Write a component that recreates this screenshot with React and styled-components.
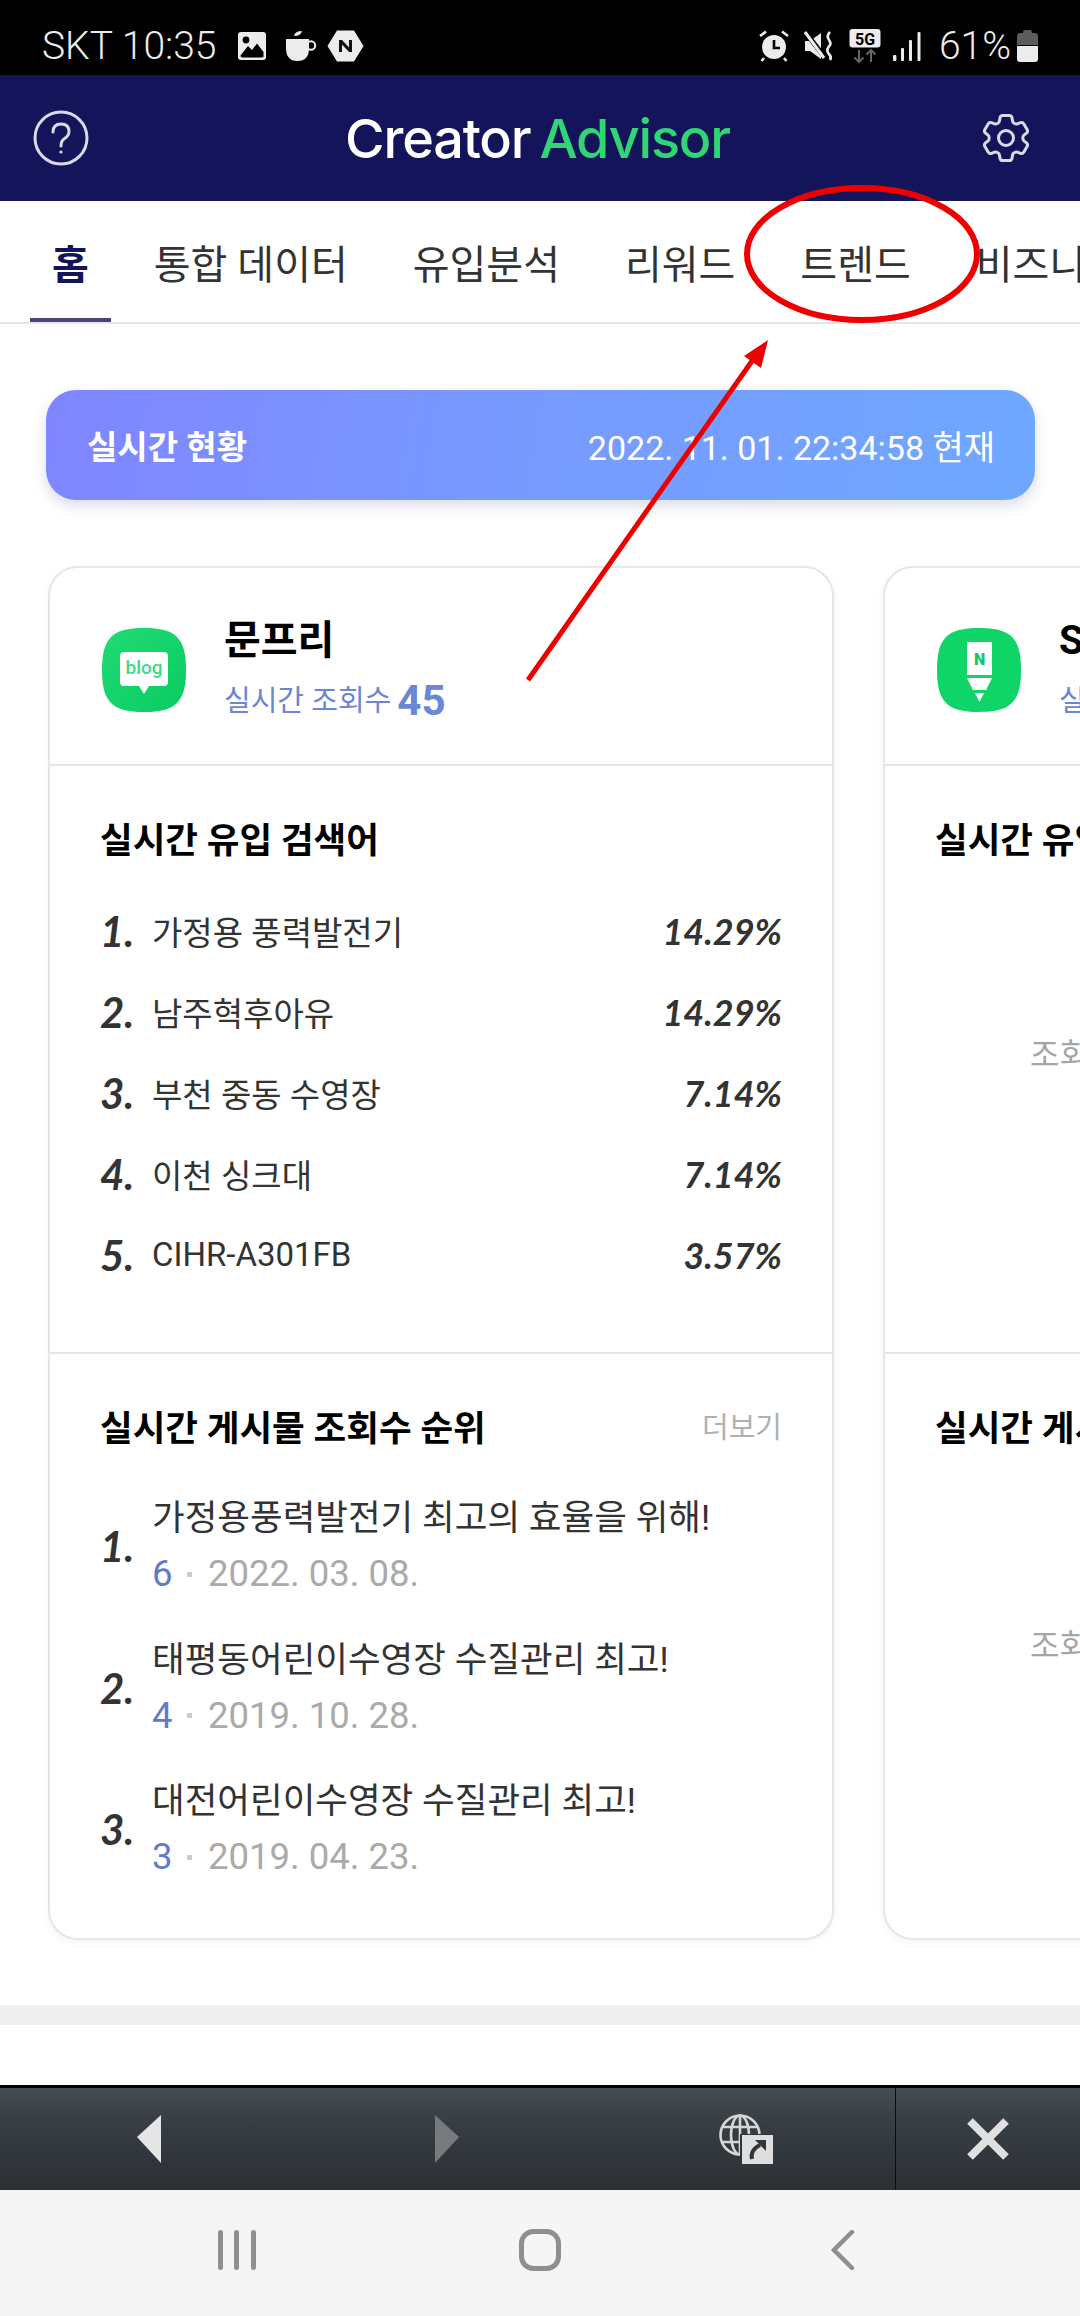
import React from 'react';
import styled, { createGlobalStyle } from 'styled-components';
import { HiOutlineCog6Tooth } from 'react-icons/hi2';

const GlobalStyle = createGlobalStyle`
  html, body {
    margin: 0;
    padding: 0;
    background: #fff;
  }
  body {
    font-family: Roboto, "Noto Sans CJK KR", sans-serif;
  }
`;

const Page = styled.div`
  position: relative;
  width: 1080px;
  height: 2316px;
  overflow: hidden;
  display: flex;
  flex-direction: column;
  background: #fff;
`;

const StatusBar = styled.div`
  height: 75px;
  flex-shrink: 0;
  background: #000;
  color: #ececec;
  display: flex;
  align-items: center;
  justify-content: space-between;
  padding: 17px 42px 0;
  box-sizing: border-box;
  font-size: 39px;
  font-weight: 300;
`;

const StatusGroup = styled.div`
  display: flex;
  align-items: center;
`;

const StatusText = styled.span`
  margin-right: ${(p) => p.$after || 0}px;
  line-height: 1;
`;

const StatusIcon = styled.svg`
  display: block;
  flex-shrink: 0;
  margin-right: ${(p) => p.$after || 0}px;
`;

const Header = styled.header`
  height: 126px;
  flex-shrink: 0;
  background: #14145a;
  display: flex;
  align-items: center;
  justify-content: space-between;
  padding: 0 44px 0 33px;
  box-sizing: border-box;
  color: #d9d9ea;
`;

const Logo = styled.div`
  font-family: Inter, sans-serif;
  font-size: 54px;
  font-weight: 500;
  letter-spacing: -1.2px;
  color: #fff;
  display: flex;
  gap: 9px;
  margin-left: 10px;
`;

const LogoAccent = styled.span`
  color: #2fd673;
`;

const Tabs = styled.nav`
  height: 123px;
  flex-shrink: 0;
  box-sizing: border-box;
  border-bottom: 2px solid #e6e6e6;
  display: flex;
  gap: 21px;
  padding-left: 30px;
  overflow: hidden;
`;

const Tab = styled.div`
  flex-shrink: 0;
  padding: 5px 22px 0;
  height: 123px;
  box-sizing: border-box;
  display: flex;
  align-items: center;
  font-size: 40px;
  white-space: nowrap;
  color: ${(p) => (p.$active ? '#14145a' : '#333')};
  font-weight: ${(p) => (p.$active ? 700 : 400)};
  border-bottom: 6px solid ${(p) => (p.$active ? '#45467a' : 'transparent')};
`;

const Banner = styled.div`
  margin: 66px 45px 0 46px;
  height: 110px;
  flex-shrink: 0;
  border-radius: 30px;
  background: linear-gradient(100deg, #8085ff 0%, #7899ff 45%, #6fa8ff 100%);
  box-shadow: 0 6px 14px rgba(90, 100, 160, 0.22);
  color: #fff;
  display: flex;
  align-items: center;
  justify-content: space-between;
  padding: 0 40px 0 41px;
`;

const BannerTitle = styled.div`
  font-size: 33px;
  font-weight: 700;
`;

const BannerTime = styled.div`
  font-size: 34px;
`;

const CardRow = styled.div`
  margin-top: 66px;
  padding-left: 48px;
  display: flex;
  gap: 49px;
  flex-shrink: 0;
`;

const Card = styled.section`
  width: 786px;
  height: 1374px;
  flex-shrink: 0;
  box-sizing: border-box;
  border: 2px solid #e6e6e6;
  border-radius: 30px;
  box-shadow: 0 2px 8px rgba(0, 0, 0, 0.05);
  display: flex;
  flex-direction: column;
  background: #fff;
`;

const CardHead = styled.div`
  height: 198px;
  flex-shrink: 0;
  box-sizing: border-box;
  display: flex;
  align-items: center;
  gap: 38px;
  padding: 8px 0 0 52px;
  border-bottom: 2px solid #e6e6e6;
`;

const CardHeadText = styled.div`
  display: flex;
  flex-direction: column;
  gap: 8px;
  margin-top: 2px;
  white-space: nowrap;
`;

const CardName = styled.div`
  font-size: 40px;
  font-weight: 700;
  color: #000;
  line-height: 52px;
`;

const CardViews = styled.div`
  font-size: 29px;
  color: #6b86d2;
  line-height: 52px;
  display: flex;
  align-items: center;
  gap: 6px;
`;

const CardViewsCount = styled.b`
  font-size: 42px;
  font-weight: 700;
`;

const Section = styled.div`
  box-sizing: border-box;
  padding: 46px 50px 0 50px;
  height: ${(p) => (p.$grow ? 'auto' : '588px')};
  flex: ${(p) => (p.$grow ? 1 : 'none')};
  border-bottom: ${(p) => (p.$grow ? 'none' : '2px solid #e6e6e6')};
`;

const SectionHead = styled.div`
  display: flex;
  align-items: center;
  justify-content: space-between;
  height: 50px;
  white-space: nowrap;
`;

const SectionTitle = styled.h3`
  margin: 0;
  font-size: 35.5px;
  font-weight: 700;
  color: #000;
`;

const More = styled.span`
  font-size: 29px;
  color: #b0b0b0;
`;

const KeywordList = styled.ol`
  list-style: none;
  margin: 28px 0 0;
  padding: 0;
`;

const Keyword = styled.li`
  height: 81px;
  display: flex;
  align-items: center;
`;

const Rank = styled.span`
  width: 52px;
  flex-shrink: 0;
  font-family: Lato, sans-serif;
  font-size: 42px;
  font-weight: 700;
  font-style: italic;
  color: #333;
`;

const KeywordText = styled.span`
  flex: 1;
  font-size: 33px;
  color: #333;
`;

const Percent = styled.span`
  font-family: Lato, sans-serif;
  font-size: 36px;
  font-weight: 700;
  font-style: italic;
  color: #333;
`;

const PostList = styled.ol`
  list-style: none;
  margin: 40px 0 0;
  padding: 0;
  display: flex;
  flex-direction: column;
  gap: 29.5px;
`;

const Post = styled.li`
  height: 112px;
  display: flex;
  align-items: center;
`;

const PostTitle = styled.div`
  font-size: 35.5px;
  line-height: 56px;
  color: #333;
  white-space: nowrap;
`;

const PostMeta = styled.div`
  font-size: 36.5px;
  line-height: 56px;
  color: #aaa;
  display: flex;
  align-items: center;
`;

const PostViews = styled.span`
  color: #5f7bc9;
  width: 35px;
`;

const Dot = styled.i`
  width: 5px;
  height: 5px;
  background: #ccc;
  margin-right: 16px;
`;

const Empty = styled.div`
  height: ${(p) => p.$height}px;
  display: flex;
  align-items: center;
  padding-left: 95px;
  font-size: 32px;
  color: #a5a5a5;
  white-space: nowrap;
`;

const Band = styled.div`
  margin-top: 65px;
  height: 20px;
  flex-shrink: 0;
  background: #efefef;
`;

const Toolbar = styled.div`
  margin-top: auto;
  height: 105px;
  flex-shrink: 0;
  box-sizing: border-box;
  border-top: 3px solid #000;
  background: linear-gradient(180deg, #454e54 0%, #363d43 35%, #2c3035 100%);
  display: grid;
  grid-template-columns: 298px 298px 299px 1fr;
`;

const ToolSlot = styled.div`
  display: flex;
  align-items: center;
  justify-content: center;
  border-left: ${(p) => (p.$divided ? '1px solid #0a0c0e' : 'none')};
`;

const NavBar = styled.div`
  height: 126px;
  flex-shrink: 0;
  background: #f5f5f5;
  display: grid;
  grid-template-columns: repeat(3, 303px);
  padding-left: 85px;
`;

const NavSlot = styled.div`
  display: flex;
  align-items: center;
  justify-content: center;
  color: #8f8f8f;
  padding-bottom: 6px;
`;

const Annotation = styled.svg`
  position: absolute;
  left: 0;
  top: 0;
  pointer-events: none;
`;

const ImageIcon = () => (
  <StatusIcon width="30" height="30" viewBox="0 0 30 30" $after={18}>
    <rect x="1" y="1" width="28" height="28" rx="3" fill="#ececec" />
    <circle cx="9" cy="9" r="3.4" fill="#000" />
    <path d="M3.5 24.5 L11 15 L15 19 L20 12.5 L26.5 21 V25.5 Q26.5 26.5 25 26.5 H5 Q3.5 26.5 3.5 24.5Z" fill="#000" />
  </StatusIcon>
);

const CupIcon = () => (
  <StatusIcon width="32" height="32" viewBox="0 0 32 32" $after={10}>
    <path d="M9 6 Q10 1 17 1 Q16 6 9 6Z" fill="#ececec" />
    <path d="M1 9 H24 V18 Q24 31 12.5 31 Q1 31 1 18Z" fill="#ececec" />
    <circle cx="26" cy="15.5" r="4.2" fill="none" stroke="#ececec" strokeWidth="2" />
  </StatusIcon>
);

const HexIcon = () => (
  <StatusIcon width="37" height="32" viewBox="0 0 37 32">
    <path d="M10 0.5 H27 L36.5 16 L27 31.5 H10 L0.5 16Z" fill="#ececec" />
    <path d="M12 22 V10 H15 L22 17.5 V10 H25 V22 H22 L15 14.5 V22Z" fill="#111" />
  </StatusIcon>
);

const AlarmIcon = () => (
  <StatusIcon width="30" height="32" viewBox="0 0 30 32" $after={15}>
    <circle cx="15" cy="17" r="12" fill="#ececec" />
    <path d="M15 10 V18 H21" fill="none" stroke="#000" strokeWidth="2.6" />
    <path d="M1 6 L7 1.5 M29 6 L23 1.5 M5 28 L2.5 31 M25 28 L27.5 31" stroke="#ececec" strokeWidth="2.6" />
  </StatusIcon>
);

const MuteIcon = () => (
  <StatusIcon width="30" height="30" viewBox="0 0 30 30" $after={15}>
    <path d="M1 10 H6 L17 2 V28 L6 20 H1Z" fill="#ececec" />
    <path d="M2 2 L22 28" stroke="#000" strokeWidth="5" />
    <path d="M1 1 L20 27" stroke="#ececec" strokeWidth="3" />
    <path d="M26 1 Q22 5 25 9 Q28 13 24.5 16 Q22 20 25 23 Q28 26 26 29" fill="none" stroke="#ececec" strokeWidth="2.6" />
  </StatusIcon>
);

const NetworkIcon = () => (
  <StatusIcon width="32" height="34" viewBox="0 0 32 34" $after={12}>
    <rect x="0.5" y="0" width="31" height="18.5" rx="3" fill="#ececec" />
    <text x="16" y="15.5" textAnchor="middle" fontFamily="Roboto, sans-serif" fontSize="16" fontWeight="700" fill="#000">5G</text>
    <path d="M10 21 V33 M5.5 28.5 L10 33 L14.5 28.5 M22 33 V21 M17.5 25.5 L22 21 L26.5 25.5" fill="none" stroke="#666" strokeWidth="2" />
  </StatusIcon>
);

const SignalIcon = () => (
  <StatusIcon width="28" height="30" viewBox="0 0 28 30" $after={18}>
    <rect x="0" y="24" width="3.4" height="6" rx="1" fill="#ececec" />
    <rect x="8" y="17" width="3" height="13" rx="1" fill="#ececec" />
    <rect x="16" y="9" width="3" height="21" rx="1" fill="#ececec" />
    <rect x="24.5" y="1" width="3" height="29" rx="1" fill="#ececec" />
  </StatusIcon>
);

const BatteryIcon = () => (
  <StatusIcon width="21" height="32" viewBox="0 0 21 32">
    <path d="M6 3 Q6 0 8 0 H13 Q15 0 15 3 H18 Q21 3 21 6 V15 H0 V6 Q0 3 3 3Z" fill="#5c5c5c" />
    <path d="M0 16 H21 V29 Q21 32 18 32 H3 Q0 32 0 29Z" fill="#ececec" />
  </StatusIcon>
);

const HelpIcon = () => (
  <svg width="56" height="56" viewBox="0 0 56 56" fill="none" stroke="currentColor" strokeWidth="3">
    <circle cx="28" cy="28" r="26" />
    <path d="M20 22 Q20 14 28 14 Q36 14 36 21.5 Q36 26 31 29 Q28 31 28 36" strokeLinecap="round" />
    <circle cx="28" cy="42" r="1.6" fill="currentColor" stroke="none" />
  </svg>
);

const BlogIcon = () => (
  <svg width="84" height="84" viewBox="0 0 84 84" style={{ flexShrink: 0 }}>
    <defs>
      <linearGradient id="blogGreen" x1="0" y1="0" x2="1" y2="1">
        <stop offset="0" stopColor="#1fdc72" />
        <stop offset="1" stopColor="#0acb62" />
      </linearGradient>
    </defs>
    <path d="M42 0 C74 0 84 10 84 42 C84 74 74 84 42 84 C10 84 0 74 0 42 C0 10 10 0 42 0Z" fill="url(#blogGreen)" />
    <path d="M22 24 H62 Q66 24 66 28 V54 Q66 58 62 58 H47 L42 66 L37 58 H22 Q18 58 18 54 V28 Q18 24 22 24Z" fill="#fff" />
    <text x="42" y="46" textAnchor="middle" fontFamily="Roboto, sans-serif" fontSize="19" fontWeight="500" fill="#3fd987">blog</text>
  </svg>
);

const PencilIcon = () => (
  <svg width="84" height="84" viewBox="0 0 84 84" style={{ flexShrink: 0 }}>
    <path d="M42 0 C74 0 84 10 84 42 C84 74 74 84 42 84 C10 84 0 74 0 42 C0 10 10 0 42 0Z" fill="#0fd468" />
    <path d="M30 14 H55 V47 H30Z M30 50 H55 L49 62 H36Z M38 65 H47 L42.5 74Z" fill="#fff" />
    <text x="42.5" y="37" textAnchor="middle" fontFamily="Roboto, sans-serif" fontSize="16" fontWeight="900" fill="#12c866">N</text>
  </svg>
);

const GlobeIcon = () => (
  <svg width="54" height="50" viewBox="0 0 54 50">
    <g fill="none" stroke="#d6d6d6" strokeWidth="2.6">
      <circle cx="21" cy="21" r="19.5" />
      <ellipse cx="21" cy="21" rx="9" ry="19.5" />
      <path d="M21 1 V41 M3 13 H39 M2 28 H40" />
    </g>
    <rect x="21" y="20" width="33" height="30" fill="#2f3439" />
    <rect x="23" y="21" width="31" height="29" fill="#dedede" />
    <path d="M33 45 Q31 36 41 31" fill="none" stroke="#30353a" strokeWidth="4" />
    <path d="M36 26 H47 V37Z" fill="#30353a" />
  </svg>
);

const keywords = [
  ['1.', '가정용 풍력발전기', '14.29%'],
  ['2.', '남주혁후아유', '14.29%'],
  ['3.', '부천 중동 수영장', '7.14%'],
  ['4.', '이천 싱크대', '7.14%'],
  ['5.', 'CIHR-A301FB', '3.57%'],
];

const posts = [
  ['1.', '가정용풍력발전기 최고의 효율을 위해!', '6', '2022. 03. 08.'],
  ['2.', '태평동어린이수영장 수질관리 최고!', '4', '2019. 10. 28.'],
  ['3.', '대전어린이수영장 수질관리 최고!', '3', '2019. 04. 23.'],
];

export default function App() {
  return (
    <Page>
      <GlobalStyle />
      <StatusBar>
        <StatusGroup>
          <StatusText $after={20}>SKT 10:35</StatusText>
          <ImageIcon />
          <CupIcon />
          <HexIcon />
        </StatusGroup>
        <StatusGroup>
          <AlarmIcon />
          <MuteIcon />
          <NetworkIcon />
          <SignalIcon />
          <StatusText $after={6}>61%</StatusText>
          <BatteryIcon />
        </StatusGroup>
      </StatusBar>

      <Header>
        <HelpIcon />
        <Logo>
          <span>Creator</span>
          <LogoAccent>Advisor</LogoAccent>
        </Logo>
        <HiOutlineCog6Tooth size={60} strokeWidth={1.2} />
      </Header>

      <Tabs>
        <Tab $active>홈</Tab>
        <Tab>통합 데이터</Tab>
        <Tab>유입분석</Tab>
        <Tab>리워드</Tab>
        <Tab>트렌드</Tab>
        <Tab>비즈니스</Tab>
      </Tabs>

      <Banner>
        <BannerTitle>실시간 현황</BannerTitle>
        <BannerTime>2022. 11. 01. 22:34:58 현재</BannerTime>
      </Banner>

      <CardRow>
        <Card>
          <CardHead>
            <BlogIcon />
            <CardHeadText>
              <CardName>문프리</CardName>
              <CardViews>
                실시간 조회수 <CardViewsCount>45</CardViewsCount>
              </CardViews>
            </CardHeadText>
          </CardHead>
          <Section>
            <SectionHead>
              <SectionTitle>실시간 유입 검색어</SectionTitle>
            </SectionHead>
            <KeywordList>
              {keywords.map(([rank, text, pct]) => (
                <Keyword key={rank}>
                  <Rank>{rank}</Rank>
                  <KeywordText>{text}</KeywordText>
                  <Percent>{pct}</Percent>
                </Keyword>
              ))}
            </KeywordList>
          </Section>
          <Section $grow>
            <SectionHead>
              <SectionTitle>실시간 게시물 조회수 순위</SectionTitle>
              <More>더보기</More>
            </SectionHead>
            <PostList>
              {posts.map(([rank, title, views, date]) => (
                <Post key={rank}>
                  <Rank>{rank}</Rank>
                  <div>
                    <PostTitle>{title}</PostTitle>
                    <PostMeta>
                      <PostViews>{views}</PostViews>
                      <Dot />
                      {date}
                    </PostMeta>
                  </div>
                </Post>
              ))}
            </PostList>
          </Section>
        </Card>

        <Card>
          <CardHead>
            <PencilIcon />
            <CardHeadText>
              <CardName>S</CardName>
              <CardViews>
                실시간 조회수 <CardViewsCount>0</CardViewsCount>
              </CardViews>
            </CardHeadText>
          </CardHead>
          <Section>
            <SectionHead>
              <SectionTitle>실시간 유입 검색어</SectionTitle>
            </SectionHead>
            <Empty $height={380}>조회된 데이터가 없습니다.</Empty>
          </Section>
          <Section $grow>
            <SectionHead>
              <SectionTitle>실시간 게시물 조회수 순위</SectionTitle>
            </SectionHead>
            <Empty $height={386}>조회된 데이터가 없습니다.</Empty>
          </Section>
        </Card>
      </CardRow>

      <Band />

      <Toolbar>
        <ToolSlot>
          <svg width="26" height="48" viewBox="0 0 26 48"><path d="M25 0 V48 L1 22Z" fill="#e6e6e6" /></svg>
        </ToolSlot>
        <ToolSlot>
          <svg width="26" height="48" viewBox="0 0 26 48"><path d="M1 0 V48 L25 22Z" fill="#777b7e" /></svg>
        </ToolSlot>
        <ToolSlot>
          <GlobeIcon />
        </ToolSlot>
        <ToolSlot $divided>
          <svg width="44" height="42" viewBox="0 0 44 42">
            <path d="M4 3 L40 39 M40 3 L4 39" stroke="#e0e0e0" strokeWidth="8" />
          </svg>
        </ToolSlot>
      </Toolbar>

      <NavBar>
        <NavSlot>
          <svg width="38" height="40" viewBox="0 0 38 40" fill="#8f8f8f">
            <rect x="0" y="0" width="5" height="40" rx="2.5" />
            <rect x="16" y="0" width="5" height="40" rx="2.5" />
            <rect x="33" y="0" width="5" height="40" rx="2.5" />
          </svg>
        </NavSlot>
        <NavSlot>
          <svg width="42" height="42" viewBox="0 0 42 42">
            <rect x="2.5" y="2.5" width="37" height="37" rx="12" fill="none" stroke="#8f8f8f" strokeWidth="5" />
          </svg>
        </NavSlot>
        <NavSlot>
          <svg width="24" height="40" viewBox="0 0 24 40">
            <path d="M21 2 L3 20 L21 38" fill="none" stroke="#8f8f8f" strokeWidth="4.5" strokeLinecap="round" />
          </svg>
        </NavSlot>
      </NavBar>

      <Annotation width="1080" height="2316" viewBox="0 0 1080 2316">
        <ellipse cx="862" cy="254" rx="115" ry="66" fill="none" stroke="#ee0000" strokeWidth="6" />
        <path d="M528 680 L752 361" stroke="#ee0000" strokeWidth="5" fill="none" />
        <path d="M768 340 L761 368 L744 356Z" fill="#ee0000" />
      </Annotation>
    </Page>
  );
}
